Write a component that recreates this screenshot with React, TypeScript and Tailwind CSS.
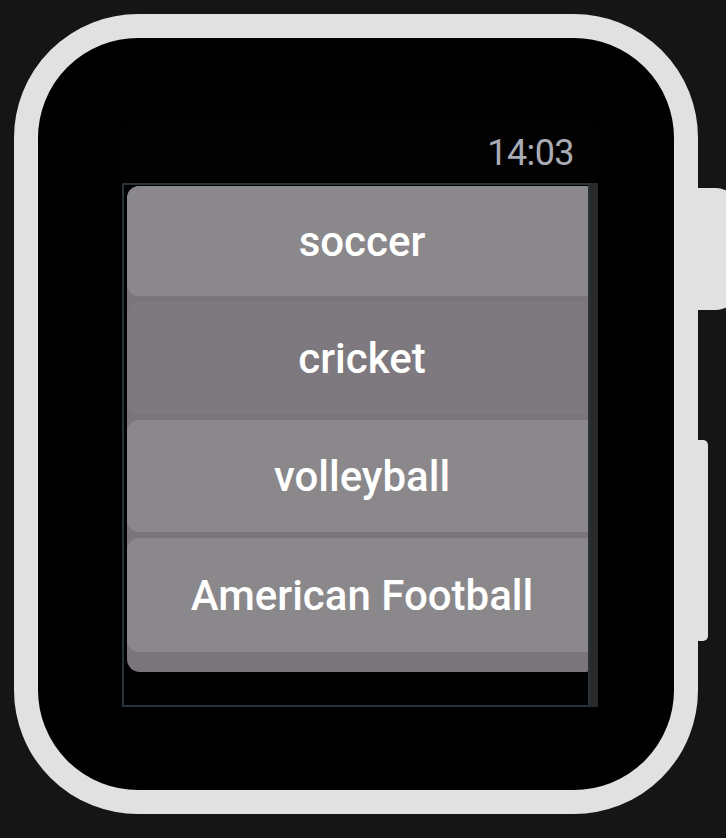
const sports = ["soccer", "cricket", "volleyball", "American Football"];

function App() {
  return (
    <div className="w-[726px] h-[838px] overflow-hidden bg-[#151515] pt-[14px] pl-[14px] font-['Roboto',sans-serif]">
      <div className="relative w-[684px] h-[800px]">
        {/* crown */}
        <div className="absolute left-[684px] top-[174px] w-[40px] h-[122px] rounded-r-[22px] bg-[#e1e1e1]" />
        {/* side button */}
        <div className="absolute left-[684px] top-[426px] w-[10px] h-[201px] rounded-r-[5px] bg-[#e1e1e1]" />

        <div className="w-full h-full rounded-[124px] border-[24px] border-[#e1e1e1] bg-black pl-[84px] pt-[84px]">
          <div className="w-[476px] h-[585px] flex flex-col bg-[#020202]">
            <div className="h-[61px] flex justify-end pr-[24px] pt-[10px]">
              <span className="text-[36px] leading-[42px] text-[#a9abb5] tracking-[-0.6px]">14:03</span>
            </div>
            <div className="flex flex-1">
              <div className="w-[468px] border-2 border-[#28323b] bg-black pt-px pl-[3px] overflow-hidden">
                <div className="w-[470px] rounded-[13px] bg-[#7a757a] flex flex-col gap-[6px] pb-[20px]">
                  {sports.map((s, i) => (
                    <div
                      key={s}
                      className={
                        "rounded-[12px] flex items-center justify-center text-white font-medium text-[42px] " +
                        (i === 0 ? "h-[110px] " : i === 3 ? "h-[114px] " : "h-[112px] ") +
                        (i === 1 ? "bg-[#7e797e]" : "bg-[#8a888b]")
                      }
                    >
                      {s}
                    </div>
                  ))}
                </div>
              </div>
              <div className="w-[8px] bg-[#292929]" />
            </div>
          </div>
        </div>
      </div>
    </div>
  );
}

export default App;
